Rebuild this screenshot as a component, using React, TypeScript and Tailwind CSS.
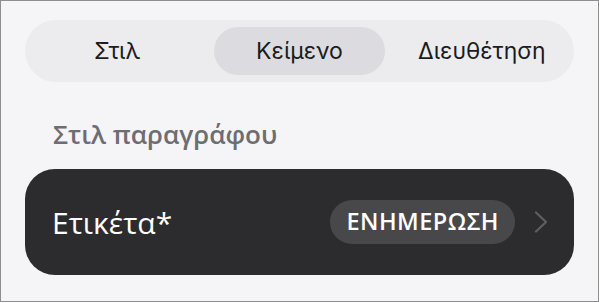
import React from "react";

export default function App() {
  return (
    <div className="w-[599px] h-[302px] border border-[#8e8e8e] bg-[#f5f5f8] px-[24px] pt-[19px] box-border">
      <div
        className="h-[62px] rounded-full bg-[#ececef] p-[7px] grid grid-cols-3 gap-[12px] text-[23px] text-[#1c1c1e]"
        style={{ fontFamily: "Inter, 'Noto Sans', sans-serif" }}
      >
        <div className="flex items-center justify-center rounded-full">Στιλ</div>
        <div className="flex items-center justify-center rounded-full bg-[#dcdce0]">Κείμενο</div>
        <div className="flex items-center justify-center rounded-full">Διευθέτηση</div>
      </div>
      <div
        className="mt-[29px] pl-[28px] h-[46px] flex items-center text-[26px] font-semibold text-[#6d6d72]"
        style={{ fontFamily: "'Open Sans', sans-serif" }}
      >
        Στιλ παραγράφου
      </div>
      <div
        className="mt-[12px] h-[106px] rounded-[30px] bg-[#2c2c2e] flex items-center pl-[27px] pr-[26px]"
        style={{ fontFamily: "'Open Sans', sans-serif" }}
      >
        <span className="text-[30px] text-white flex-1">Ετικέτα*</span>
        <span className="h-[44px] rounded-full bg-[#48484a] px-[16px] flex items-center text-[23.5px] font-semibold text-white tracking-[0.5px]">
          ΕΝΗΜΕΡΩΣΗ
        </span>
        <svg className="ml-[19px]" width="14" height="22" viewBox="0 0 14 22" fill="none">
          <path d="M2 1.5 L12 11 L2 20.5" stroke="#5f5f63" strokeWidth="2.2" strokeLinecap="round" strokeLinejoin="round" />
        </svg>
      </div>
    </div>
  );
}
